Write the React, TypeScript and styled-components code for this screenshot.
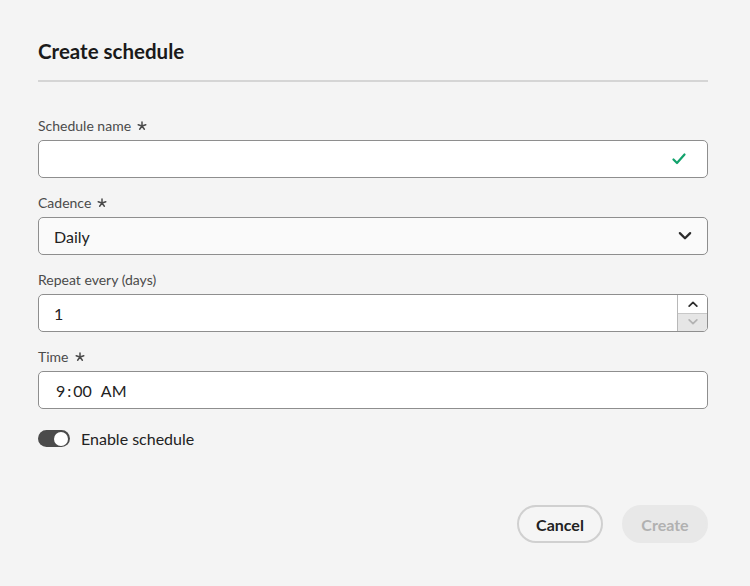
import React from "react";
import styled, { createGlobalStyle } from "styled-components";

const Global = createGlobalStyle`
  html, body {
    margin: 0;
    background: #f4f4f4;
    font-family: Lato, "Noto Sans", sans-serif;
    color: #222;
  }
`;

const Dialog = styled.div`
  width: 750px;
  height: 586px;
  box-sizing: border-box;
  padding: 36px 42px 0 38px;
  display: flex;
  flex-direction: column;
`;

const Title = styled.h1`
  margin: 0;
  font-size: 20.5px;
  font-weight: 700;
  line-height: 30px;
  color: #1a1a1a;
`;

const Divider = styled.hr`
  margin: 14px 0 0;
  border: none;
  height: 2px;
  background: #d5d5d5;
`;

const Form = styled.div`
  display: flex;
  flex-direction: column;
  gap: 15px;
  margin-top: 34px;
`;

const Field = styled.div`
  display: flex;
  flex-direction: column;
  gap: 5px;
`;

const Label = styled.label`
  display: flex;
  align-items: center;
  gap: 6px;
  font-size: 14px;
  line-height: 19px;
  color: #4b4b4b;
`;

const Box = styled.div<{ $tint?: boolean }>`
  height: 38px;
  box-sizing: border-box;
  border: 1px solid #8e8e8e;
  border-radius: 5px;
  background: ${(p) => (p.$tint ? "#fafafa" : "#fff")};
  display: flex;
  align-items: center;
  padding: 0 16px 0 15px;
  font-size: 16px;
  color: #222;
  overflow: hidden;
`;

const Value = styled.span`
  flex: 1;
  white-space: pre;
`;

const TimeValue = styled.span`
  flex: 1;
  padding-left: 2px;
  display: flex;
  align-items: baseline;
`;

const Colon = styled.span`
  margin: 0 2px;
`;

const Meridiem = styled.span`
  margin-left: 9px;
`;

const Stepper = styled.div`
  align-self: stretch;
  width: 29px;
  margin-right: -16px;
  border-left: 1px solid #b8b8b8;
  display: flex;
  flex-direction: column;
`;

const StepButton = styled.div<{ $disabled?: boolean }>`
  flex: 1;
  display: flex;
  align-items: center;
  justify-content: center;
  background: ${(p) => (p.$disabled ? "#e6e6e6" : "#fff")};
  color: ${(p) => (p.$disabled ? "#b3b3b3" : "#2c2c2c")};
  & + & {
    border-top: 1px solid #c8c8c8;
  }
`;

const ToggleRow = styled.div`
  display: flex;
  align-items: center;
  gap: 11px;
  margin-top: 5px;
  font-size: 16px;
  color: #222;
`;

const Track = styled.div`
  width: 32px;
  height: 17px;
  border-radius: 9px;
  background: #4b4b4b;
  display: flex;
  align-items: center;
  justify-content: flex-end;
  padding: 0 2px;
  box-sizing: border-box;
`;

const Knob = styled.div`
  width: 14px;
  height: 14px;
  border-radius: 50%;
  background: #fff;
`;

const Footer = styled.div`
  display: flex;
  justify-content: flex-end;
  gap: 19px;
  margin-top: 57px;
`;

const Button = styled.button<{ $variant: "outline" | "disabled" }>`
  height: 38px;
  width: 86px;
  padding: 0;
  border-radius: 19px;
  font-family: inherit;
  font-size: 16px;
  font-weight: 700;
  border: 2px solid ${(p) => (p.$variant === "outline" ? "#d0d0d0" : "#e8e8e8")};
  background: ${(p) => (p.$variant === "outline" ? "#f5f5f5" : "#e8e8e8")};
  color: ${(p) => (p.$variant === "outline" ? "#222" : "#b1b1b1")};
`;

const IconSlot = styled.span<{ $shift?: number }>`
  display: flex;
  color: #2c2c2c;
  margin-right: ${(p) => p.$shift ?? 0}px;
`;

const Chevron = ({ up, size = 14 }: { up?: boolean; size?: number }) => (
  <svg width={size} height={size} viewBox="0 0 14 14" fill="none">
    <path
      d={up ? "M2.5 9.5 L7 5 L11.5 9.5" : "M2.5 4.5 L7 9 L11.5 4.5"}
      stroke="currentColor"
      strokeWidth="2"
      strokeLinecap="round"
      strokeLinejoin="round"
    />
  </svg>
);

const Check = () => (
  <svg width="14" height="14" viewBox="0 0 14 14" fill="none">
    <path
      d="M1.5 7.5 L5 11 L12.5 2.5"
      stroke="#12a26c"
      strokeWidth="2.2"
      strokeLinecap="round"
      strokeLinejoin="round"
    />
  </svg>
);

const Asterisk = () => (
  <svg width="10" height="10" viewBox="0 0 10 10" fill="none">
    <path
      d="M5 5 L5 1 M5 5 L8.8 3.76 M5 5 L7.35 8.24 M5 5 L2.65 8.24 M5 5 L1.2 3.76"
      stroke="#4b4b4b"
      strokeWidth="1.5"
      strokeLinecap="round"
    />
  </svg>
);

export default function App() {
  return (
    <>
      <Global />
      <Dialog>
        <Title>Create schedule</Title>
        <Divider />
        <Form>
          <Field>
            <Label>
              Schedule name
              <Asterisk />
            </Label>
            <Box>
              <Value />
              <IconSlot $shift={5}>
                <Check />
              </IconSlot>
            </Box>
          </Field>
          <Field>
            <Label>
              Cadence
              <Asterisk />
            </Label>
            <Box $tint>
              <Value>Daily</Value>
              <IconSlot $shift={-2}>
                <Chevron size={16} />
              </IconSlot>
            </Box>
          </Field>
          <Field>
            <Label>Repeat every (days)</Label>
            <Box>
              <Value>1</Value>
              <Stepper>
                <StepButton>
                  <Chevron up size={12} />
                </StepButton>
                <StepButton $disabled>
                  <Chevron size={12} />
                </StepButton>
              </Stepper>
            </Box>
          </Field>
          <Field>
            <Label>
              Time
              <Asterisk />
            </Label>
            <Box>
              <TimeValue>
                9<Colon>:</Colon>00<Meridiem>AM</Meridiem>
              </TimeValue>
            </Box>
          </Field>
          <ToggleRow>
            <Track>
              <Knob />
            </Track>
            Enable schedule
          </ToggleRow>
        </Form>
        <Footer>
          <Button $variant="outline">Cancel</Button>
          <Button $variant="disabled">Create</Button>
        </Footer>
      </Dialog>
    </>
  );
}
